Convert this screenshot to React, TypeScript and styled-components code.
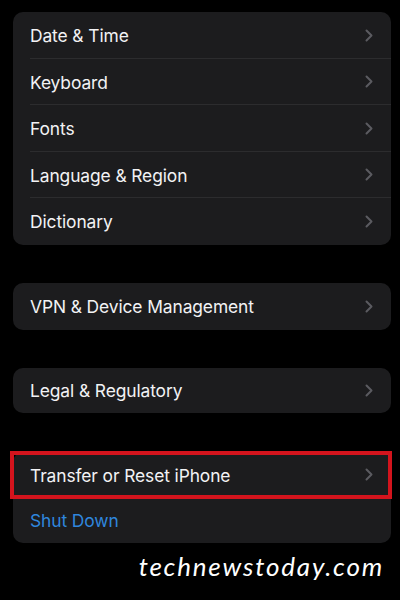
import React from "react";
import styled, { createGlobalStyle } from "styled-components";

const Global = createGlobalStyle`
  html, body { margin: 0; padding: 0; background: #000; }
  body { font-family: Inter, "Liberation Sans", Arial, sans-serif; -webkit-font-smoothing: antialiased; }
`;

const Page = styled.div`
  width: 400px;
  height: 600px;
  box-sizing: border-box;
  padding: 12px 9px 0 13px;
  display: flex;
  flex-direction: column;
  gap: 38px;
  overflow: hidden;
  background: #000;
`;

const Group = styled.div<{ $shift?: number }>`
  background: #1c1c1e;
  border-radius: 10px;
  display: flex;
  flex-direction: column;
  margin-top: ${(p) => p.$shift ?? 0}px;
`;

const Row = styled.div<{ $divider?: boolean; $h?: number }>`
  position: relative;
  height: ${(p) => p.$h ?? 46.5}px;
  display: flex;
  align-items: center;
  padding-left: 17px;
  padding-right: 18px;
  box-sizing: border-box;
  &::after {
    content: "";
    display: ${(p) => (p.$divider ? "block" : "none")};
    position: absolute;
    left: 17px;
    right: 0;
    bottom: 0;
    height: 1px;
    background: #2c2c2e;
  }
`;

const Label = styled.span<{ $tone?: "link" }>`
  flex: 1;
  font-size: 17.4px;
  letter-spacing: -0.1px;
  padding-top: 1px;
  color: ${(p) => (p.$tone === "link" ? "#2f86dd" : "#f2f2f4")};
`;

const Highlight = styled.div`
  position: absolute;
  left: -3px;
  right: -1px;
  top: -1px;
  bottom: -1px;
  border: 4px solid #d3141d;
  pointer-events: none;
`;

const Watermark = styled.div`
  margin-top: -31px;
  padding-right: 7px;
  text-align: right;
  font-family: Lato, "Open Sans", sans-serif;
  font-style: italic;
  font-weight: 400;
  font-size: 26px;
  letter-spacing: 1.8px;
  color: #fff;
`;

const Chevron = () => (
  <svg width="8" height="13" viewBox="0 0 8 13" fill="none">
    <path d="M1.5 1.5l5 5-5 5" stroke="#5b5b60" strokeWidth="2" strokeLinecap="round" strokeLinejoin="round" />
  </svg>
);

const Item = ({ label, divider, tone, chevron = true, h, children }: {
  label: string; divider?: boolean; tone?: "link"; chevron?: boolean; h?: number; children?: React.ReactNode;
}) => (
  <Row $divider={divider} $h={h}>
    <Label $tone={tone}>{label}</Label>
    {chevron && <Chevron />}
    {children}
  </Row>
);

export default function App() {
  const general = ["Date & Time", "Keyboard", "Fonts", "Language & Region", "Dictionary"];
  return (
    <>
      <Global />
      <Page>
        <Group>
          {general.map((l, i) => (
            <Item key={l} label={l} divider={i < general.length - 1} />
          ))}
        </Group>
        <Group>
          <Item label="VPN & Device Management" h={47} />
        </Group>
        <Group>
          <Item label="Legal & Regulatory" h={45} />
        </Group>
        <Group $shift={1}>
          <Item label="Transfer or Reset iPhone" h={46}>
            <Highlight />
          </Item>
          <Item label="Shut Down" tone="link" chevron={false} h={45} />
        </Group>
        <Watermark>technewstoday.com</Watermark>
      </Page>
    </>
  );
}
